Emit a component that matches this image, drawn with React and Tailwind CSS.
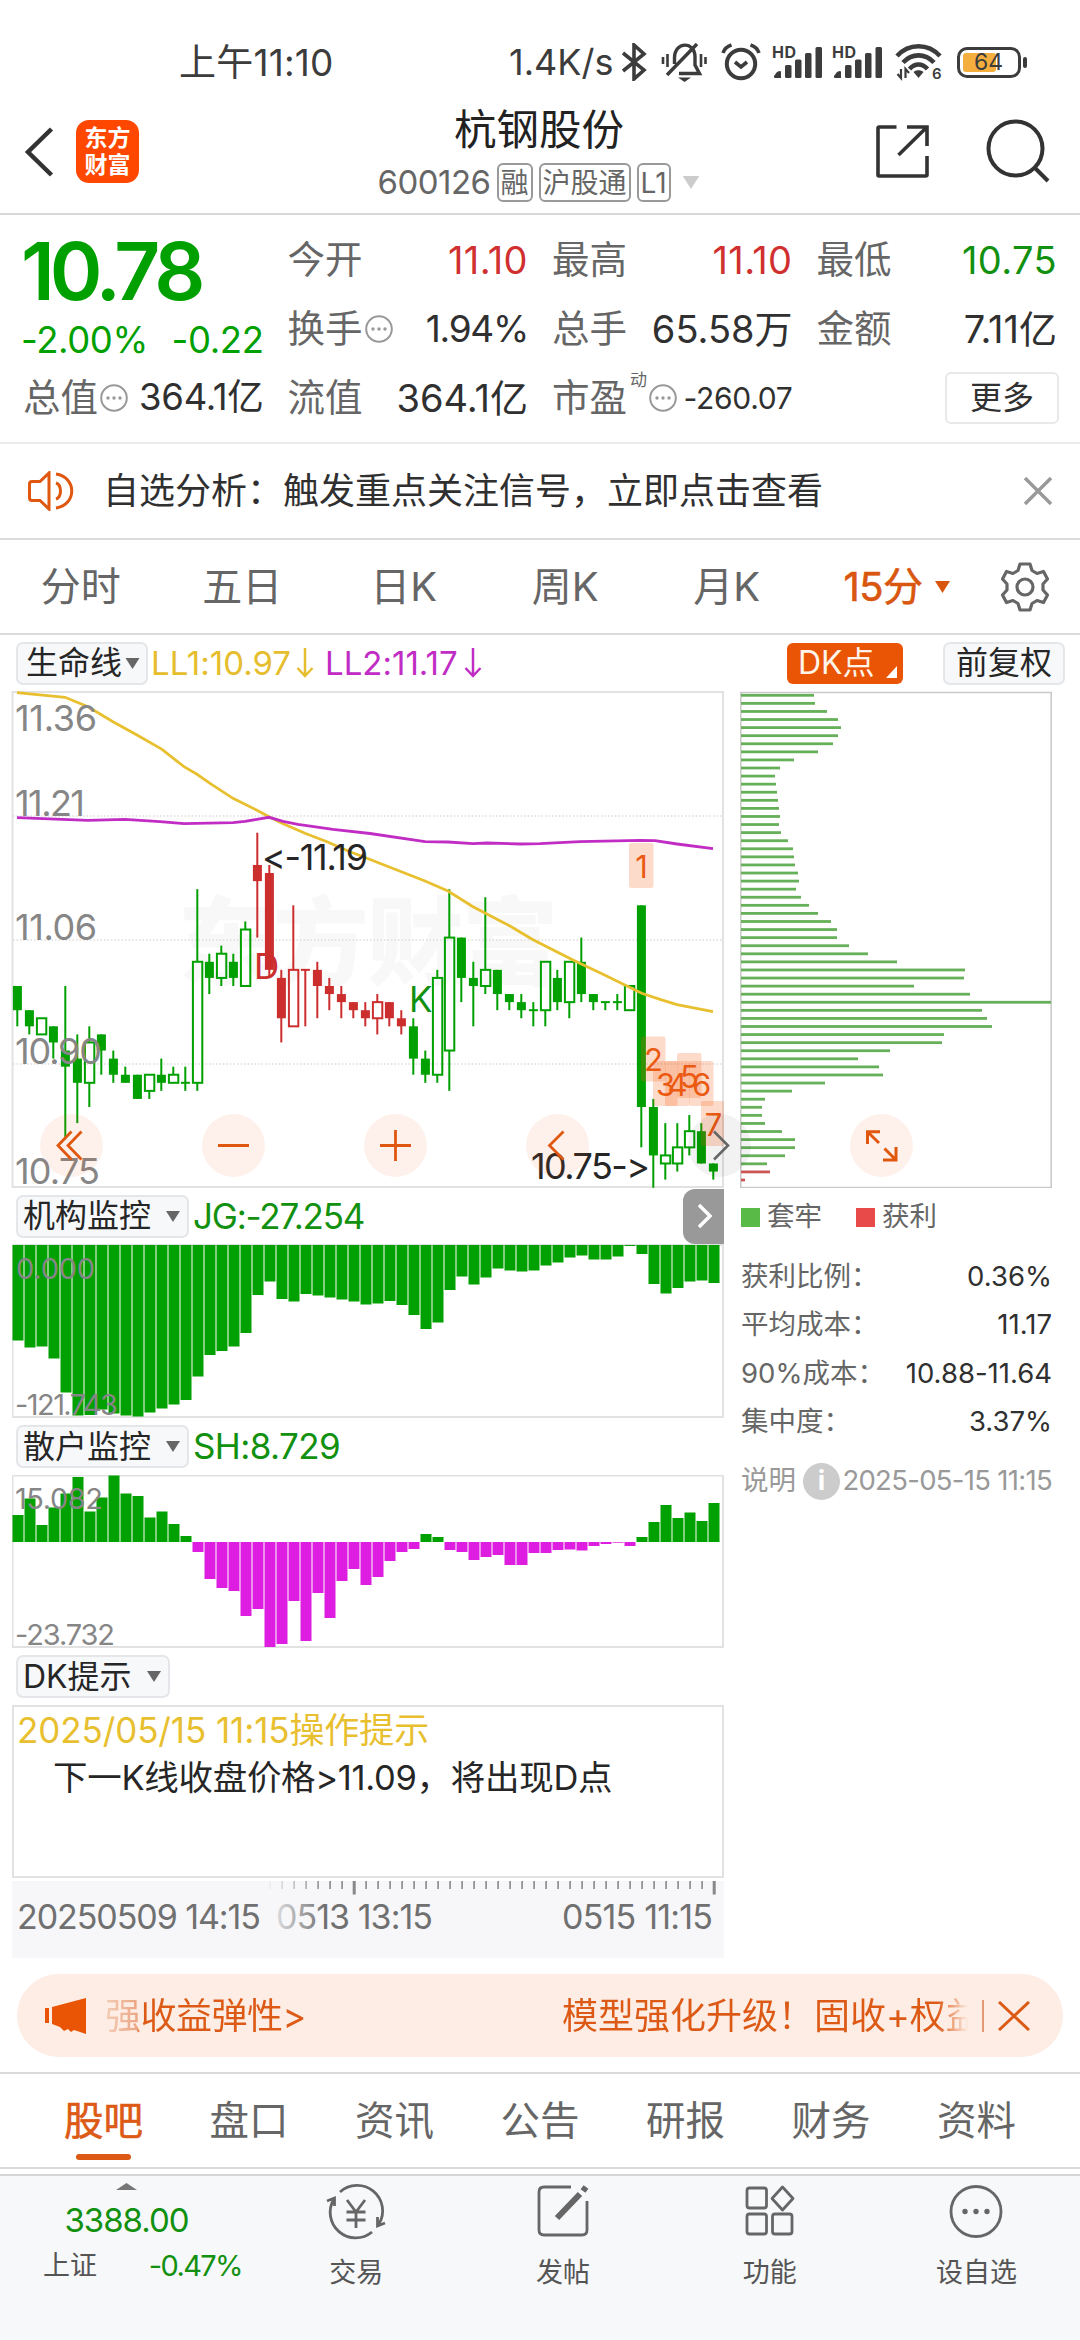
import React from 'react';

const GREEN = '#00a000';
const RED = '#cc2e2e';
const ORANGE = '#e0570f';

// [high, bodyTop, bodyBottom, low, type] in ticks of 0.01 below 11.19
// f = filled body, h = hollow body
const candles = [
    [19, 19, 22, 24, 'f'], [22, 22, 24, 25, 'f'], [23, 23, 25, 25, 'h'], [24, 24, 26, 28, 'f'],
    [19, 27, 29, 38, 'f'], [25, 28, 31, 36, 'f'], [24, 26, 31, 34, 'h'], [25, 25, 27, 30, 'f'],
    [27, 28, 30, 31, 'f'], [29, 30, 31, 31, 'f'], [30, 30, 33, 33, 'f'], [30, 30, 32, 33, 'h'],
    [28, 30, 31, 32, 'f'], [29, 30, 31, 31, 'h'], [29, 31, 31, 32, 'f'], [7, 16, 31, 32, 'h'],
    [15, 16, 18, 20, 'f'], [14, 15, 18, 19, 'h'], [15, 16, 18, 19, 'f'], [11, 12, 19, 19, 'h'],
    [0, 4, 6, 13, 'f'], [4, 5, 17, 18, 'f'], [17, 18, 23, 26, 'f'], [9, 17, 24, 24, 'h'],
    [17, 17, 17, 24, 'f'], [16, 17, 19, 23, 'f'], [18, 19, 20, 22, 'f'], [19, 20, 21, 23, 'f'],
    [21, 21, 22, 23, 'f'], [21, 22, 23, 24, 'f'], [20, 21, 23, 25, 'h'], [21, 21, 23, 24, 'f'],
    [22, 23, 24, 25, 'f'], [23, 24, 28, 30, 'f'], [27, 28, 30, 31, 'f'], [17, 18, 30, 31, 'h'],
    [7, 13, 27, 32, 'h'], [13, 13, 18, 21, 'f'], [16, 18, 19, 24, 'f'], [8, 17, 19, 20, 'h'],
    [17, 17, 20, 22, 'f'], [20, 20, 21, 22, 'f'], [20, 21, 22, 23, 'f'], [21, 22, 22, 24, 'f'],
    [16, 16, 22, 24, 'h'], [17, 18, 21, 22, 'f'], [16, 16, 21, 23, 'h'], [13, 16, 20, 21, 'f'],
    [20, 20, 21, 22, 'f'], [21, 21, 21, 22, 'f'], [20, 21, 21, 22, 'f'], [19, 19, 22, 22, 'h'],
    [9, 9, 34, 39, 'f'], [33, 34, 40, 44, 'f'], [36, 40, 41, 43, 'h'], [36, 39, 41, 42, 'h'],
    [35, 37, 39, 40, 'h'], [36, 37, 41, 41, 'f'], [41, 41, 42, 43, 'f'],
];

const jg = [
    95, 102, 101, 113, 147, 170, 169.5, 164, 168, 170, 171, 167, 163, 159, 154.5, 131, 109.5, 105.5, 101, 87.5,
    49.5, 36, 53.5, 56, 48.5, 50, 52, 54, 56, 59, 58, 55.5, 59.5, 69.5, 83.5, 77, 44.5, 31, 39, 32,
    23, 25, 26, 25, 20, 17, 12, 10, 14, 14, 11, 0.5, 8.5, 38.5, 48, 42.5, 36, 35, 37.5,
];

const sh = [
    27, 43.5, 17, 34.5, 48.5, 65, 30.5, 44.5, 66.5, 48.5, 46, 24.5, 30.5, 18, 6, -10, -37, -46, -49, -74,
    -67, -105, -102, -59, -99, -51, -76, -39, -27, -43, -35, -19, -10, -7, 8, 5, -8, -10, -18, -15,
    -13, -23, -23, -11, -11, -8, -7.5, -8.5, -4, -2, -0.7, -4, 5, 20, 37, 24, 29.5, 21, 39,
];

const chips = [
    73, 74, 86, 97, 100, 97, 92, 77, 53, 39, 34, 35, 36, 37, 38, 39, 38, 40, 47, 52, 53,
    54, 57, 58, 55, 60, 68, 77, 90, 96, 96, 108, 127, 156, 224, 223, 173, 229, 310, 241, 246,
    251, 203, 201, 149, 117, 138, 142, 84, 51, 24, 21, 21, 24, 41, 54, 54, 44, 26, 29, 4,
];

const LL1 = '17,692.7 65,697.3 88,706.7 113,721.7 137,735 162,749.3 184,766.7 197,774.3 210,783.3 233,798.3 257,810.3 269,816.7 282,823.3 305,833.3 327,841.7 350,851.7 365,857.5 425,881 448,891 473,906.7 510,926 533,939.7 573,960 603,974.3 641.7,993.3 660,999.3 677,1004.7 713,1011.7';
const LL2 = '17,817.7 88,820.3 125,819.3 160,821.7 184,823.7 233,822.7 245,821.3 269,817.3 283,821.3 298,824.3 333,829.3 370,833.5 425,841.7 448,842 473,843.7 487,843 520,844 540,843.7 580,841.7 640,840.3 655,840.7 677,844 713,848.7';

const marks = [
    [1, 629, 843], [2, 641, 1036.5], [3, 653, 1061], [4, 665, 1061], [5, 677, 1053], [6, 689, 1061], [7, 701, 1101],
];

const cx = (i) => 17.3 + i * 12;
const cy = (t) => 832.7 + t * 8.068;

const Candle = ({ i, data }) => {
    const [high, top, bottom, low, type] = data;
    const color = i >= 20 && i <= 32 ? RED : GREEN;
    const x = cx(i);
    if (type === 'h') {
        return (
            <g stroke={color} strokeWidth="2" fill="none">
                {high < top && <path d={`M${x} ${cy(high)}V${cy(top)}`} />}
                {low > bottom && <path d={`M${x} ${cy(bottom)}V${cy(low)}`} />}
                <rect x={x - 4.4} y={cy(top)} width="9.4" height={cy(bottom) - cy(top)} />
            </g>
        );
    }
    return (
        <g fill={color}>
            <rect x={x - 1} y={cy(high)} width="2" height={cy(low) - cy(high)} />
            <rect x={x - 4.4} y={cy(top) - (top === bottom ? 1 : 0)} width="9" height={Math.max(cy(bottom) - cy(top), 2)} />
        </g>
    );
};

const Label = ({ x, y, w, size = 36, fill = '#868686', children }) => (
    <text x={x} y={y} textLength={w} fontSize={size} fill={fill}>{children}</text>
);

const MainChart = () => (
    <svg className="relative z-10 block overflow-visible" width="712" height="497" viewBox="12 691 712 497">
        <rect x="12.5" y="692" width="710.5" height="495" fill="none" stroke="#e2e2e2" strokeWidth="2" />
        <text x="178" y="977" fontSize="96" fontWeight="900" fill="#f8f8f8" textLength="380">东方财富</text>
        <g stroke="#dcdcdc" strokeWidth="1.5" strokeDasharray="1.5 2">
            <path d="M13 816H723M13 940H723M13 1064H723" />
        </g>
        {candles.map((c, i) => <Candle key={i} i={i} data={c} />)}
        <Label x="254" y="979" size="35" fill={RED}>D</Label>
        <Label x="409" y="1012" size="35" fill="#12900f">K</Label>
        <polyline points={LL1} fill="none" stroke="#e8c02f" strokeWidth="2.8" />
        <polyline points={LL2} fill="none" stroke="#c12dc4" strokeWidth="2.8" />
        <Label x="15" y="731" w="82">11.36</Label>
        <Label x="15" y="816" w="70">11.21</Label>
        <Label x="15" y="940" w="82">11.06</Label>
        <Label x="15" y="1064" w="87">10.90</Label>
        <Label x="15" y="1184" w="85">10.75</Label>
        <Label x="262" y="870" w="106" fill="#262626">&lt;-11.19</Label>
        <Label x="531" y="1179" w="119" fill="#262626">10.75-&gt;</Label>
        {marks.map(([n, x, y]) => (
            <g key={n}>
                <rect x={x} y={y} width={n === 7 ? 23 : 24.5} height="45" rx="2" fill="#f55a14" fillOpacity="0.22" />
                <text x={x + 12.5} y={y + 34.5} fontSize="31" textAnchor="middle" fill="#ea5a12">{n}</text>
            </g>
        ))}
        <g fill="#f55a14" fillOpacity="0.085">
            <circle cx="71.5" cy="1145.5" r="31.5" />
            <circle cx="233.5" cy="1145.5" r="31.5" />
            <circle cx="395.5" cy="1145.5" r="31.5" />
            <circle cx="557.5" cy="1145.5" r="31.5" />
        </g>
        <circle cx="719.5" cy="1145.5" r="31.5" fill="#000" fillOpacity="0.05" />
        <g fill="none" stroke={ORANGE} strokeWidth="2.8">
            <path d="M71.5 1131.5L58 1145.5L71.5 1159.5M81.5 1131.5L68 1145.5L81.5 1159.5" />
            <path d="M218 1145.5H249M380 1145.5H411M395.5 1130V1161" />
            <path d="M563.5 1131.5L549.5 1145.5L563.5 1159.5" />
        </g>
        <path d="M714 1131.5L728 1145.5L714 1159.5" fill="none" stroke="#666" strokeWidth="2.6" />
    </svg>
);

const ChipChart = () => (
    <svg className="block" width="348" height="497" viewBox="732 691 348 497">
        <rect x="740.8" y="692.5" width="310.4" height="495" fill="none" stroke="#c9c9c9" strokeWidth="1.5" />
        {chips.map((w, i) => (
            <rect key={i} x="741" y={693.9 + i * 8.078} width={w} height="2.8" fill={i > 58 ? '#cc5555' : '#66b059'} />
        ))}
        <circle cx="881.5" cy="1145.5" r="31.5" fill="#f55a14" fillOpacity="0.085" />
        <path
            d="M880 1131.8H867.5V1144M867.5 1131.8L879 1143M896 1147V1160H883M896 1160L884.5 1148.5"
            fill="none" stroke={ORANGE} strokeWidth="3"
        />
    </svg>
);

const JgChart = () => (
    <svg className="block" width="712" height="174" viewBox="12 1244 712 174">
        <rect x="12.5" y="1245" width="710.5" height="172" fill="none" stroke="#e2e2e2" strokeWidth="2" />
        {jg.map((v, i) => <rect key={i} x={12.5 + i * 12} y="1245" width="11" height={v + 0.5} fill={GREEN} />)}
        <Label x="16" y="1279" w="79" size="29">0.000</Label>
        <Label x="15" y="1415" w="103" size="29">-121.743</Label>
    </svg>
);

const ShChart = () => (
    <svg className="block" width="712" height="173" viewBox="12 1475 712 173">
        <rect x="12.5" y="1475.5" width="710.5" height="171.5" fill="none" stroke="#e2e2e2" strokeWidth="2" />
        {sh.map((v, i) => (
            <rect key={i} x={12.5 + i * 12} y={v > 0 ? 1542 - v : 1542} width="11" height={Math.abs(v)} fill={v > 0 ? GREEN : '#dd1ee0'} />
        ))}
        <Label x="15" y="1509" w="88" size="29">15.082</Label>
        <Label x="15" y="1645" w="100" size="29">-23.732</Label>
    </svg>
);

const TimeAxis = () => (
    <svg className="mt-[3px] block" width="712" height="77" viewBox="12 1881 712 77">
        <defs>
            <linearGradient id="fade" gradientUnits="userSpaceOnUse" x1="270" x2="325" y1="0" y2="0">
                <stop offset="0" stopColor="#f7f7fa" stopOpacity="0.9" />
                <stop offset="1" stopColor="#f7f7fa" stopOpacity="0" />
            </linearGradient>
        </defs>
        <rect x="12" y="1881" width="712" height="77" fill="#f7f7fa" />
        {Array.from({ length: 38 }, (_, i) => {
            const big = i === 7 || i === 37;
            return <rect key={i} x={(big ? 268.7 : 269.3) + i * 12} y="1881" width={big ? 3 : 1.6} height={big ? 13.5 : 8} fill="#888" />;
        })}
        <Label x="17" y="1929" w="244" size="34" fill="#707070">20250509 14:15</Label>
        <Label x="276" y="1929" w="157" size="34" fill="#707070">0513 13:15</Label>
        <Label x="562" y="1929" w="151" size="34" fill="#707070">0515 11:15</Label>
        <rect x="265" y="1881" width="62" height="77" fill="url(#fade)" />
    </svg>
);

const Down = ({ className }) => (
    <svg className={className} viewBox="0 0 14 11"><path d="M0 0H14L7 11Z" fill="currentColor" /></svg>
);

const Pill = ({ children, tight }) => (
    <div className="flex h-[43px] items-center rounded-[7px] border-2 border-[#e4e6ea] bg-[#f7f8fa] px-[6px] text-[32px] text-[#262626]">
        <span className={tight ? 'ml-[2px]' : '-ml-[1px]'}>{children}</span>
        <Down className={tight ? 'ml-[3px] h-[11px] w-[15px] text-[#666]' : 'ml-[15px] mr-[1px] h-[11px] w-[14px] text-[#666]'} />
    </div>
);

const DownArrow = () => (
    <svg className="h-[30px] w-[18px]" viewBox="0 0 18 30" fill="none" stroke="currentColor" strokeWidth="2.5">
        <path d="M9 0V28M1.5 20L9 28L16.5 20" />
    </svg>
);

const Dots = () => (
    <svg className="ml-[2px] h-[28px] w-[28px] shrink-0" viewBox="0 0 28 28">
        <circle cx="14" cy="14" r="12.8" fill="none" stroke="#999" strokeWidth="2" />
        <g fill="#999"><circle cx="8" cy="14" r="1.7" /><circle cx="14" cy="14" r="1.7" /><circle cx="20" cy="14" r="1.7" /></g>
    </svg>
);

const Cell = ({ name, value, dots, className = 'text-[38px] text-[#303030]' }) => (
    <div className="flex items-center">
        <span className="text-[37.5px] text-[#666]">{name}</span>
        {dots && <Dots />}
        <span className={`ml-auto ${className}`}>{value}</span>
    </div>
);

const Signal = () => (
    <svg className="h-[34px] w-[52px] overflow-visible" viewBox="0 0 52 34" fill="#3c3c3c">
        <text x="0" y="13" fontSize="16" fontWeight="700" textLength="24">HD</text>
        <path d="M9 33H3Q1.5 33 2 31L5 27Q9 25 9 27Z" />
        <rect x="13" y="20" width="6.5" height="13" rx="1.5" />
        <rect x="23" y="14.5" width="6.5" height="18.5" rx="1.5" />
        <rect x="33" y="8" width="6.5" height="25" rx="1.5" />
        <rect x="43.5" y="2" width="6.5" height="31" rx="1.5" />
    </svg>
);

const StatusBar = () => (
    <div className="flex h-[104px] items-center pt-[20px] text-[37px] text-[#3c3c3c]">
        <span className="ml-[179px] w-[330px] tracking-[0.2px]">上午11:10</span>
        <span className="w-[110px] text-[36px]">1.4K/s</span>
        <svg className="ml-[2px] h-[38px] w-[26px]" viewBox="0 0 26 38" fill="none" stroke="#3c3c3c" strokeWidth="3.6">
            <path d="M2 10L23 27L13 36V2L23 11L2 28" />
        </svg>
        <svg className="ml-[14px] h-[38px] w-[46px] overflow-visible" viewBox="0 0 46 38" fill="none" stroke="#3c3c3c" strokeWidth="3.4">
            <path d="M13.5 21V15C13.5 -2 34 -2 34 14V22L38.5 30.5H18M6 32L36 1" />
            <path d="M17 34.5H30L23.500 39Z" fill="#3c3c3c" stroke="none" />
            <path d="M2 14V21M6.500 11V24M40 11V24M44.500 14V21" strokeWidth="2.6" />
        </svg>
        <svg className="ml-[14px] h-[38px] w-[40px] overflow-visible" viewBox="0 0 40 38" fill="none" stroke="#3c3c3c" strokeWidth="4">
            <circle cx="20" cy="21" r="14.2" />
            <path d="M2 10Q4 4 10.500 2M38 10Q36 4 29.500 2" strokeWidth="3.6" />
            <path d="M14 19L20 24L26 19" strokeWidth="3.6" />
        </svg>
        <div className="ml-[11px]"><Signal /></div>
        <div className="ml-[8px]"><Signal /></div>
        <svg className="ml-[11px] h-[36px] w-[48px] overflow-visible" viewBox="0 0 48 36" fill="none" stroke="#3c3c3c" strokeWidth="4.6">
            <path d="M2 12C14 -1 33 -1 45 12M8 18.5C17 9 30 9 39 18.5M14.5 25C20 19 27 19 32.5 25" />
            <path d="M23.5 34L18.5 28C21 25.5 26 25.5 28.5 28Z" fill="#3c3c3c" stroke="none" />
            <path d="M6 25V34L2.500 30M10.500 34V25L14 29" strokeWidth="2.2" />
            <text x="37" y="35" fontSize="15" fontWeight="600" fill="#3c3c3c" stroke="none">6</text>
        </svg>
        <div className="ml-[14px] flex h-[31px] w-[64px] items-center rounded-[10px] border-[3.5px] border-[#3c3c3c] p-[3px]">
            <div className="h-full w-[33px] rounded-[3px] bg-[#f4ae3d]" />
            <span className="-ml-[22px] text-[23px] leading-[24px]">64</span>
        </div>
        <div className="ml-[2px] h-[11px] w-[4px] rounded bg-[#3c3c3c]" />
    </div>
);

const Tag = ({ children }) => (
    <span className="flex h-[39px] items-center rounded-[6px] border-2 border-[#999] px-[2px] text-[28px] text-[#666]">{children}</span>
);

const Header = () => (
    <div className="flex h-[111px] items-start border-b-2 border-[#d9d9d9]">
        <svg className="ml-[24px] mt-[23px] h-[50px] w-[30px]" viewBox="0 0 30 50" fill="none" stroke="#333" strokeWidth="4.5">
            <path d="M27.5 2L4 25L27.5 48" />
        </svg>
        <div className="ml-[22px] mt-[16px] flex h-[63px] w-[63px] flex-col items-center justify-center rounded-[13px] bg-[#ff4700] text-[23px] font-bold leading-[27px] text-white">
            <span>东方</span>
            <span>财富</span>
        </div>
        <div className="ml-[137px] flex w-[526px] flex-col items-center">
            <div className="h-[51px] text-[42.5px] leading-[51px] text-[#222]">杭钢股份</div>
            <div className="mt-[8px] flex items-center gap-[6px] text-[#666]">
                <span className="text-[33px] tracking-[-0.5px]">600126</span>
                <Tag>融</Tag>
                <Tag>沪股通</Tag>
                <Tag>L1</Tag>
                <Down className="ml-[4px] h-[13px] w-[20px] text-[#ccc]" />
            </div>
        </div>
        <svg className="ml-[73px] mt-[20px] h-[55px] w-[55px]" viewBox="0 0 55 55" fill="none" stroke="#333" strokeWidth="3.6">
            <path d="M21.500 3H4Q3 3 3 4V51Q3 52 4 52H50.500Q52 52 52 51V32M32 3H52V22M52 3L23.500 31" />
        </svg>
        <svg className="ml-[56px] mt-[15px] h-[64px] w-[64px]" viewBox="0 0 64 64" fill="none" stroke="#333" strokeWidth="4">
            <circle cx="29.5" cy="29.5" r="27" />
            <path d="M48.500 48.500L62 62" />
        </svg>
    </div>
);

const Quote = () => (
    <div className="grid h-[229px] grid-cols-4 grid-rows-[69px_69px_69px] gap-x-[24px] border-b-2 border-[#ececec] px-[23px] pt-[10px]">
        <div className="row-span-2 text-[#00a000]">
            <div className="-ml-[2px] flex h-[92px] items-center text-[80px] font-semibold tracking-[-5px]">10.78</div>
            <div className="-ml-[2px] flex h-[46px] items-center justify-between text-[36.5px] tracking-[-0.4px]">
                <span>-2.00%</span>
                <span>-0.22</span>
            </div>
        </div>
        <Cell name="今开" value="11.10" className="text-[38px] tracking-[0.4px] text-[#d03030]" />
        <Cell name="最高" value="11.10" className="text-[38px] tracking-[0.4px] text-[#d03030]" />
        <Cell name="最低" value="10.75" className="text-[38px] tracking-[0.4px] text-[#12900f]" />
        <Cell name="换手" value="1.94%" dots className="text-[37px] tracking-[-1.3px] text-[#303030]" />
        <Cell name="总手" value="65.58万" />
        <Cell name="金额" value="7.11亿" />
        <Cell name="总值" value="364.1亿" dots className="text-[36.5px] tracking-[-0.3px] text-[#303030]" />
        <Cell name="流值" value="364.1亿" />
        <div className="flex items-center">
            <span className="text-[37.5px] text-[#666]">市盈</span>
            <span className="mb-[34px] ml-[3px] text-[17px] text-[#666]">动</span>
            <Dots />
            <span className="ml-auto text-[30px] tracking-[-0.3px] text-[#303030]">-260.07</span>
        </div>
        <div className="-mr-[2px] flex items-center justify-end">
            <div className="flex h-[52px] w-[114px] items-center justify-center rounded-[6px] border-2 border-[#e8e8e8] text-[32px] text-[#303030]">更多</div>
        </div>
    </div>
);

const Notice = () => (
    <div className="flex h-[96px] items-center border-b-2 border-[#dcdcdc] pl-[28px]">
        <svg className="h-[40px] w-[48px]" viewBox="0 0 48 40" fill="none" stroke={ORANGE} strokeWidth="3">
            <path d="M21 2V38L12 29.5H4Q1.5 29.5 1.5 27V13Q1.5 10.5 4 10.5H12Z" />
            <path d="M28 12C34 14 34 26 28 28M28 3C49 6 49 34 28 37" />
        </svg>
        <span className="ml-[27px] text-[36px] text-[#303030]">自选分析：触发重点关注信号，立即点击查看</span>
        <svg className="ml-auto mr-[28px] h-[28px] w-[28px]" viewBox="0 0 28 28" stroke="#999" strokeWidth="3.4">
            <path d="M1 1L27 27M27 1L1 27" />
        </svg>
    </div>
);

const PeriodTabs = () => (
    <div className="flex h-[95px] items-center border-b-2 border-[#dcdcdc] text-[40px] text-[#666]">
        {['分时', '五日', '日K', '周K', '月K'].map((t) => (
            <div key={t} className="w-[161.5px] text-center">{t}</div>
        ))}
        <div className="ml-[36px] w-[82px] tracking-[-0.5px] text-[#d9560f] [-webkit-text-stroke:0.6px_#d9560f]">15分</div>
        <Down className="ml-[9px] h-[12px] w-[15px] text-[#d9560f]" />
        <svg className="ml-[51px] h-[50px] w-[48px]" viewBox="0 0 48 50" fill="none" stroke="#666" strokeWidth="3.2" strokeLinejoin="round">
            <path d="M19 2H29L31 8.500L36 11.500L42.500 9.500L46.500 17L42 22V28L46.500 33L42.500 40.500L36 38.500L31 41.500L29 48H19L17 41.500L12 38.500L5.500 40.500L1.500 33L6 28V22L1.500 17L5.500 9.500L12 11.500L17 8.500Z" />
            <circle cx="24" cy="25" r="8" />
        </svg>
    </div>
);

const ChartHeader = () => (
    <div className="flex h-[56px] items-center pl-[16px] pr-[15px] text-[33px]">
        <Pill tight>生命线</Pill>
        <span className="ml-[3px] w-[145px] text-[#e6bd2c]">LL1:10.97</span>
        <span className="text-[#e6bd2c]"><DownArrow /></span>
        <span className="ml-[11px] w-[139px] text-[#c12dc4]">LL2:11.17</span>
        <span className="text-[#c12dc4]"><DownArrow /></span>
        <div className="ml-auto flex h-[41px] w-[116px] items-center rounded-[6px] bg-[#e95504] pl-[11px] text-[32px] text-[#fff3ea]">
            DK点
            <svg className="ml-auto mr-[6px] mt-[18px] h-[12px] w-[11px]" viewBox="0 0 11 12"><path d="M11 0V12H0Z" fill="#fff" /></svg>
        </div>
        <div className="ml-[40px] flex h-[43px] w-[122px] items-center justify-center rounded-[7px] border-2 border-[#e4e6ea] bg-[#f7f8fa] text-[32px] text-[#262626]">前复权</div>
    </div>
);

const stats = [
    ['获利比例：', '0.36%'],
    ['平均成本：', '11.17'],
    ['90%成本：', '10.88-11.64'],
    ['集中度：', '3.37%'],
];

const ChipInfo = () => (
    <div className="pl-[9px] pr-[28px] text-[27.5px] text-[#666]">
        <div className="flex h-[58px] items-center">
            <div className="h-[19px] w-[19px] bg-[#5aba47]" />
            <span className="ml-[7px]">套牢</span>
            <div className="ml-[34px] h-[19px] w-[19px] bg-[#e84a4a]" />
            <span className="ml-[7px]">获利</span>
        </div>
        <div className="mt-[6px]">
            {stats.map(([name, value]) => (
                <div key={name} className="flex h-[48.5px] items-center justify-between">
                    <span>{name}</span>
                    <span className="text-[#303030]">{value}</span>
                </div>
            ))}
        </div>
        <div className="mt-[13px] flex h-[44px] items-center text-[#999]">
            <span>说明</span>
            <div className="ml-[7px] flex h-[37px] w-[37px] items-center justify-center rounded-full bg-[#ccc] font-bold text-white">i</div>
            <span className="ml-auto tracking-[-0.7px]">2025-05-15 11:15</span>
        </div>
    </div>
);

const Charts = () => (
    <div className="flex h-[1267px]">
        <div className="ml-[12px] w-[712px]">
            <MainChart />
            <div className="flex h-[56px] items-center pl-[4px] text-[35px] text-[#12900f]">
                <Pill>机构监控</Pill>
                <span className="ml-[4px] tracking-[-1.2px]">JG:-27.254</span>
                <div className="ml-auto flex h-[55px] w-[41px] items-center justify-center rounded-l-[12px] bg-[#999]">
                    <svg className="ml-[2px] h-[26px] w-[15px]" viewBox="0 0 15 26" fill="none" stroke="#fff" strokeWidth="3.5"><path d="M2 2L13 13L2 24" /></svg>
                </div>
            </div>
            <JgChart />
            <div className="flex h-[57px] items-center pl-[4px] text-[35px] text-[#12900f]">
                <Pill>散户监控</Pill>
                <span className="ml-[4px] tracking-[-0.6px]">SH:8.729</span>
            </div>
            <ShChart />
            <div className="flex h-[57px] items-center pl-[4px]"><Pill>DK提示</Pill></div>
            <div className="h-[173px] border-2 border-[#e2e2e2] pl-[3px] text-[35px]">
                <div className="-mt-[1px] h-[48px] leading-[48px] tracking-[-0.1px] text-[#e8c02f]">2025/05/15 11:15操作提示</div>
                <div className="h-[48px] pl-[36px] text-[34.5px] leading-[48px] tracking-[-0.3px] text-[#262626]">下一K线收盘价格&gt;11.09，将出现D点</div>
            </div>
            <TimeAxis />
        </div>
        <div className="ml-[8px] w-[348px]">
            <ChipChart />
            <ChipInfo />
        </div>
    </div>
);

const Banner = () => (
    <div className="mx-[17px] mt-[16px] flex h-[83px] items-center rounded-full bg-[#fdede4] text-[36px] text-[#dc5a16]">
        <svg className="ml-[27px] h-[38px] w-[43px]" viewBox="0 0 43 38" fill="#e95504">
            <path d="M1 11H5V26H1ZM8 10L42 1V37L30 33L27 35L24 32L20 34L16 30L8 27Z" />
        </svg>
        <div className="ml-[18px] w-[457px] bg-[linear-gradient(90deg,#f5cdb8,#eba684_32px,#dc5a16_36px)] bg-clip-text leading-[50px] tracking-[-0.5px] text-transparent">强收益弹性&gt;</div>
        <div className="w-[406px] overflow-hidden bg-[linear-gradient(90deg,#dc5a16_375px,#fdede4_406px)] bg-clip-text leading-[50px] whitespace-nowrap text-transparent">模型强化升级！固收+权益</div>
        <div className="ml-[14px] h-[32px] w-[2px] bg-[#e39a74]" />
        <svg className="ml-[14px] h-[30px] w-[32px]" viewBox="0 0 32 30" stroke="#dc5a16" strokeWidth="3">
            <path d="M1 1L31 29M31 1L1 29" />
        </svg>
    </div>
);

const InfoTabs = () => (
    <div className="mt-[15px] flex h-[97px] justify-between border-y-2 border-[#dadada] px-[64px] pt-[21px] text-[39.5px] text-[#666]">
        {['股吧', '盘口', '资讯', '公告', '研报', '财务', '资料'].map((t, i) => (
            <div key={t} className={i === 0 ? 'flex flex-col items-center text-[#dc5a16] [-webkit-text-stroke:0.6px_#dc5a16]' : 'flex flex-col items-center'}>
                <span className="h-[52px] leading-[52px]">{t}</span>
                {i === 0 && <div className="mt-[7px] h-[6px] w-[55px] rounded-full bg-[#dc5a16]" />}
            </div>
        ))}
    </div>
);

const NavItem = ({ label, children }) => (
    <div className="flex w-[206.7px] flex-col items-center">
        <svg className="mt-[6px] h-[60px] w-[66px]" viewBox="0 0 66 60" fill="none" stroke="#666" strokeWidth="2.8">{children}</svg>
        <span className="mt-[11px] h-[40px] text-[27px] leading-[40px] text-[#555]">{label}</span>
    </div>
);

const BottomNav = () => (
    <div className="mt-[5px] flex h-[166px] border-t-2 border-[#d4d6d8] bg-[#f7f8fa]">
        <div className="flex w-[253px] flex-col items-center">
            <svg className="mt-[7px] h-[7px] w-[21px]" viewBox="0 0 21 7"><path d="M10.5 0L21 7H0Z" fill="#777" /></svg>
            <div className="mt-[8px] h-[44px] text-[33px] leading-[44px] tracking-[-1px] text-[#12900f]">3388.00</div>
            <div className="mt-[9px] ml-[32px] flex w-[199px] items-center justify-between">
                <span className="text-[27px] text-[#555]">上证</span>
                <span className="text-[29px] tracking-[-1.6px] text-[#12900f]">-0.47%</span>
            </div>
        </div>
        <NavItem label="交易">
            <path d="M17 10A25.5 25.5 0 0 1 56 42M49 50A25.5 25.5 0 0 1 11 17M4 19L11.5 16V24M62 41L54.5 44V35" />
            <path d="M24 18L33 30L42 18M33 30V46M23.5 30H42.5M23.5 38H42.5" />
        </NavItem>
        <NavItem label="发帖">
            <path d="M41 5H14Q9 5 9 10V48Q9 53 14 53H52Q57 53 57 48V19" />
            <path d="M27 36L50 12M53 9L56 5" strokeWidth="6" />
        </NavItem>
        <NavItem label="功能">
            <rect x="10" y="6" width="19.5" height="20" rx="2.5" />
            <rect x="10" y="32" width="19.5" height="20" rx="2.5" />
            <rect x="35.5" y="32" width="19.5" height="20" rx="2.5" />
            <path d="M45.5 5L56 16.5L45.5 28L35 16.5Z" strokeLinejoin="round" />
        </NavItem>
        <NavItem label="设自选">
            <circle cx="33" cy="29.5" r="25" />
            <g fill="#666" stroke="none"><circle cx="22" cy="29.5" r="2.7" /><circle cx="33" cy="29.5" r="2.7" /><circle cx="44" cy="29.5" r="2.7" /></g>
        </NavItem>
    </div>
);

export default function App() {
    return (
        <div className="h-[2340px] w-[1080px] overflow-hidden bg-white font-['Inter','Noto_Sans_CJK_SC',sans-serif] leading-none whitespace-nowrap [font-feature-settings:'calt'_0]">
            <StatusBar />
            <Header />
            <Quote />
            <Notice />
            <PeriodTabs />
            <ChartHeader />
            <Charts />
            <Banner />
            <InfoTabs />
            <BottomNav />
        </div>
    );
}
